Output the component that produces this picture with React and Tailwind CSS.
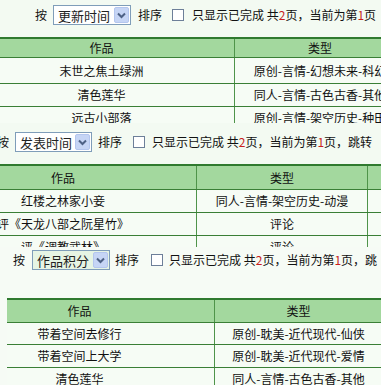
const font = { fontFamily: '"Noto Sans CJK SC", "Liberation Sans", sans-serif' };

function Select({ label, w, hl }) {
  return (
    <div
      className={`flex items-center h-[20px] border border-[#7f9db9] shrink-0 ${hl ? "bg-[#e6f4e4]" : "bg-white"}`}
      style={{ width: w }}
    >
      <span className="flex-1 pl-[4px] text-[13px] leading-none text-[#222] whitespace-nowrap">{label}</span>
      <span className="mr-px w-[15px] h-[16px] rounded-[2px] bg-[#c6d5f5] border border-[#b4c6ee] flex items-center justify-center">
        <svg width="9" height="7" viewBox="0 0 9 7">
          <path d="M1 1.5 L4.5 5 L8 1.5" fill="none" stroke="#4d6185" strokeWidth="2" />
        </svg>
      </span>
    </div>
  );
}

function Box() {
  return <span className="w-[12px] h-[12px] border border-[#6d7f99] bg-white shrink-0" />;
}

function Pages({ tail }) {
  return (
    <span className="whitespace-nowrap">
      只显示已完成 共<span className="text-[#c81e1e]">2</span>页，当前为第<span className="text-[#c81e1e]">1</span>页{tail}
    </span>
  );
}

function Row({ cells, h, header, last }) {
  return (
    <div
      className={`flex shrink-0 ${header ? "bg-[#a3d89e]" : "bg-[#f6fcf5]"} ${last ? "" : "border-b border-[#3a7f36]"}`}
      style={{ height: h }}
    >
      {cells.map((c, i) => (
        <div
          key={i}
          className={`shrink-0 flex items-center justify-center text-[12px] text-[#111] whitespace-nowrap overflow-hidden ${i < cells.length - 1 ? "border-r border-[#4f944a]" : ""}`}
          style={{ width: c.w, paddingRight: c.pr || 0 }}
        >
          {c.t}
        </div>
      ))}
    </div>
  );
}

export default function App() {
  return (
    <div className="w-[381px] h-[385px] overflow-hidden bg-[#f3faf2]" style={font}>
      {/* strip 1 */}
      <div className="h-[123px] overflow-hidden flex flex-col">
        <div className="flex items-center h-[20px] mt-[5px] pl-[35px] text-[12px] text-[#111] whitespace-nowrap [&>*]:shrink-0">
          <span>按</span>
          <span className="ml-[6px]"><Select label="更新时间" w={78} /></span>
          <span className="ml-[7px]">排序</span>
          <span className="ml-[10px] flex"><Box /></span>
          <span className="ml-[8px]"><Pages tail="" /></span>
        </div>
        <div className="ml-[25px] h-[2px] mt-[1px] bg-[#c80d0d] rounded-l-full" />
        <div className="mt-[11px] border-t-2 border-[#2f7a2f] -ml-[31px] w-[436px] flex flex-col">
          <Row header h={19} cells={[{ w: 266, t: "作品" }, { w: 170, t: "类型" }]} />
          <Row h={26} cells={[{ w: 266, t: "末世之焦土绿洲" }, { w: 170, t: "原创-言情-幻想未来-科幻" }]} />
          <Row h={23} cells={[{ w: 266, t: "清色莲华" }, { w: 170, t: "同人-言情-古色古香-其他" }]} />
          <Row h={23} cells={[{ w: 266, t: "远古小部落" }, { w: 170, t: "原创-言情-架空历史-种田" }]} />
        </div>
      </div>

      {/* strip 2 */}
      <div className="h-[124px] overflow-hidden flex flex-col">
        <div className="mt-[5px] h-px bg-[#8cc488]" />
        <div className="flex items-center h-[20px] mt-[4px] -ml-[3px] text-[12px] text-[#111] whitespace-nowrap [&>*]:shrink-0">
          <span>按</span>
          <span className="ml-[6px]"><Select label="发表时间" w={77} /></span>
          <span className="ml-[6px]">排序</span>
          <span className="ml-[11px] flex"><Box /></span>
          <span className="ml-[7px]"><Pages tail="，跳转" /></span>
        </div>
        <div className="ml-[7px] w-[345px] h-[2px] mt-[3px] bg-[#c80d0d] rounded-full" />
        <div className="mt-[9px] border-t-2 border-[#2f7a2f] -ml-[70px] w-[490px] flex flex-col">
          <Row header h={24} cells={[{ w: 267, t: "作品" }, { w: 171, t: "类型" }, { w: 52, t: "" }]} />
          <Row h={23} cells={[{ w: 267, t: "红楼之林家小妾" }, { w: 171, t: "同人-言情-架空历史-动漫" }, { w: 52, t: "" }]} />
          <Row h={23} cells={[{ w: 267, t: "评《天龙八部之阮星竹》" }, { w: 171, t: "评论" }, { w: 52, t: "" }]} />
          <Row h={23} cells={[{ w: 267, t: "评《调教武林》" }, { w: 171, t: "评论" }, { w: 52, t: "" }]} />
        </div>
      </div>

      {/* strip 3 */}
      <div className="h-[138px] overflow-hidden flex flex-col bg-[#f6fbf5]">
        <div className="ml-[15px] w-[85px] h-px bg-[#2d3a2d]" />
        <div className="flex items-center h-[20px] mt-[3px] pl-[13px] text-[12px] text-[#111] whitespace-nowrap [&>*]:shrink-0">
          <span>按</span>
          <span className="ml-[7px]"><Select label="作品积分" w={78} hl /></span>
          <span className="ml-[5px]">排序</span>
          <span className="ml-[12px] flex"><Box /></span>
          <span className="ml-[6px]"><Pages tail="，跳" /></span>
        </div>
        <div className="w-[347px] h-[3px] bg-[#c80d0d] rounded-r-full" />
        <div className="ml-[7px] w-[366px] h-px mt-[11px] bg-[#2f6f2f]" />
        <div className="mt-[17px] border-t-2 border-[#2f7a2f] ml-[7px] w-[380px] flex flex-col">
          <Row header h={23} cells={[{ w: 208, t: "作品", pr: 62 }, { w: 172, t: "类型", pr: 5 }]} />
          <Row h={22} cells={[{ w: 208, t: "带着空间去修行", pr: 62 }, { w: 172, t: "原创-耽美-近代现代-仙侠", pr: 5 }]} />
          <Row h={23} cells={[{ w: 208, t: "带着空间上大学", pr: 62 }, { w: 172, t: "原创-耽美-近代现代-爱情", pr: 5 }]} />
          <Row h={23} cells={[{ w: 208, t: "清色莲华", pr: 62 }, { w: 172, t: "同人-言情-古色古香-其他", pr: 5 }]} />
        </div>
      </div>
    </div>
  );
}
